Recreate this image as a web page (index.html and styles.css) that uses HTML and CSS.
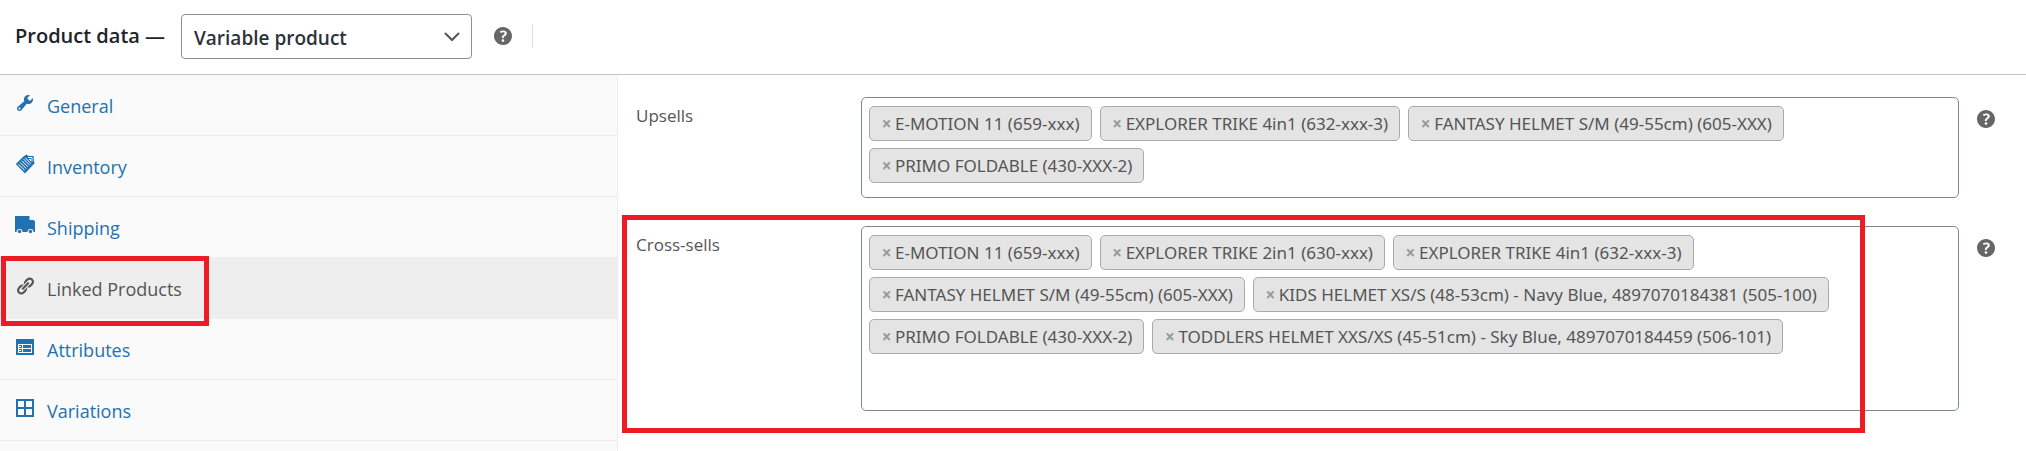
FILE: index.html
```html
<!DOCTYPE html>
<html lang="en">
<head>
<meta charset="utf-8">
<meta name="viewport" content="width=device-width, initial-scale=1">
<title>Product data</title>
<link rel="stylesheet" href="styles.css">
</head>
<body>
<svg class="defs" aria-hidden="true">
  <path id="help" d="M17 10c0-3.87-3.14-7-7-7-3.87 0-7 3.13-7 7s3.13 7 7 7c3.86 0 7-3.13 7-7zM10.700 11.480H9.140v-.43c0-.38.08-.7.24-.98s.46-.57.88-.89c.41-.29.68-.53.81-.71.14-.18.2-.39.2-.62 0-.25-.09-.44-.28-.58-.19-.13-.45-.19-.79-.19-.58 0-1.250.19-2 .57l-.64-1.280c.87-.49 1.800-.74 2.770-.74.81 0 1.450.2 1.920.58.48.39.71.91.71 1.550 0 .43-.09.8-.29 1.110-.19.32-.57.67-1.110 1.060-.38.28-.61.49-.71.63-.1.15-.15.34-.15.57v.35zm-1.470 2.740c-.18-.17-.27-.42-.27-.73 0-.33.08-.58.26-.75s.43-.25.77-.25c.32 0 .57.09.75.26s.27.42.27.74c0 .3-.09.55-.27.72-.18.18-.43.27-.75.27-.33 0-.58-.09-.76-.26z"/>
</svg>
<header class="header">
  <label class="title" for="type">Product data —</label>
  <div class="picker">
    <select id="type" class="type"><option>Variable product</option></select>
    <svg class="chevron" viewBox="0 0 20 20" aria-hidden="true"><path d="M3 6l7 7 7-7"/></svg>
  </div>
  <button class="help" type="button" aria-label="Help"><svg viewBox="3 3 14 14"><use href="#help"/></svg></button>
  <span class="divider"></span>
</header>
<div class="panel">
  <nav class="tabs">
    <a class="tab" href="#general"><svg class="icon" viewBox="0 0 20 20"><path d="M16.68 9.77c-1.34 1.34-3.3 1.67-4.95.99l-5.41 6.52c-.99.99-2.59.99-3.58 0s-.99-2.59 0-3.57l6.52-5.42c-.68-1.65-.35-3.61.99-4.95 1.28-1.28 3.12-1.62 4.72-1.06l-2.89 2.89 2.82 2.82 2.86-2.87c.53 1.58.18 3.39-1.08 4.65zM3.81 16.21c.4.39 1.04.39 1.43 0 .4-.4.4-1.04 0-1.43-.39-.4-1.03-.4-1.43 0-.39.39-.39 1.03 0 1.43z"/></svg>General</a>
    <a class="tab" href="#inventory"><svg class="icon" viewBox="0 0 20 20"><path d="M9 2l2.500-1.500 2 1.500 5 0 .5 6 .8 1L10 19.500.8 10z"/><path class="cut" d="M3.500 10.200l6 6M5.200 8.500l6 6M6.900 6.800l6 6M8.600 5.100l6 6M10.300 3.800l5.500 5.700M13 3.500h4v4M14 5.500h1.500v1.500"/></svg>Inventory</a>
    <a class="tab" href="#shipping"><svg class="icon" viewBox="0 0 20 20"><path d="M0 1h14.500v4h4l1.500 1.500V17h-1.500a3 3 0 0 0-6 0H7.500a3 3 0 0 0-6 0H0z"/><circle cx="4.500" cy="16.500" r="1.700"/><circle cx="15.500" cy="16.500" r="1.700"/></svg>Shipping</a>
    <a class="tab active" href="#linked" aria-current="page"><svg class="icon" viewBox="0 0 20 20"><path d="M17.740 2.760c1.680 1.690 1.680 4.410 0 6.100l-1.530 1.520c-1.120 1.120-2.700 1.470-4.140 1.090l2.620-2.610.76-.77.76-.76c.84-.84.84-2.200 0-3.040-.84-.85-2.200-.85-3.040 0l-.77.76-3.380 3.380c-.37-1.440-.02-3.020 1.100-4.140l1.520-1.530c1.690-1.680 4.420-1.680 6.100 0zM8.590 13.430l5.340-5.340c.42-.42.42-1.100 0-1.520-.44-.43-1.130-.39-1.530 0l-5.330 5.340c-.42.42-.42 1.100 0 1.520.44.43 1.130.39 1.520 0zm-.76 2.290l4.140-4.150c.38 1.440.03 3.020-1.090 4.140l-1.520 1.530c-1.690 1.680-4.410 1.680-6.100 0-1.680-1.680-1.680-4.420 0-6.100l1.530-1.520c1.120-1.120 2.700-1.470 4.140-1.100l-4.140 4.150c-.85.84-.85 2.200 0 3.050.84.84 2.200.84 3.040 0z"/></svg>Linked Products<span class="mark mark-tab"></span></a>
    <a class="tab" href="#attributes"><svg class="icon" viewBox="0 0 20 20"><path fill-rule="evenodd" d="M1 2h18v16H1zM3 7v9h14V7z"/><path d="M4 8h3v3H4zM4 12h3v3H4zM8 8h8v3H8zM8 12h8v3H8z"/><path class="cut" d="M4 9.500h2M4 13.500h2"/></svg>Attributes</a>
    <a class="tab" href="#variations"><svg class="icon" viewBox="0 0 20 20"><path fill-rule="evenodd" d="M1 1h18v18H1zM3 3v6h6V3zM11 3v6h6V3zM3 11v6h6v-6zM11 11v6h6v-6z"/></svg>Variations</a>
  </nav>
  <main class="fields">
    <div class="field">
      <label class="label" for="upsells">Upsells</label>
      <div class="box">
        <span class="chip"><button class="remove" type="button">×</button>E-MOTION 11 (659-xxx)</span>
        <span class="chip"><button class="remove" type="button">×</button>EXPLORER TRIKE 4in1 (632-xxx-3)</span>
        <span class="chip"><button class="remove" type="button">×</button>FANTASY HELMET S/M (49-55cm) (605-XXX)</span>
        <span class="chip"><button class="remove" type="button">×</button>PRIMO FOLDABLE (430-XXX-2)</span>
        <input class="search" id="upsells" type="text">
      </div>
      <button class="help" type="button" aria-label="Help"><svg viewBox="3 3 14 14"><use href="#help"/></svg></button>
    </div>
    <div class="field">
      <label class="label" for="cross">Cross-sells</label>
      <div class="box">
        <span class="chip"><button class="remove" type="button">×</button>E-MOTION 11 (659-xxx)</span>
        <span class="chip"><button class="remove" type="button">×</button>EXPLORER TRIKE 2in1 (630-xxx)</span>
        <span class="chip"><button class="remove" type="button">×</button>EXPLORER TRIKE 4in1 (632-xxx-3)</span>
        <span class="chip"><button class="remove" type="button">×</button>FANTASY HELMET S/M (49-55cm) (605-XXX)</span>
        <span class="chip"><button class="remove" type="button">×</button>KIDS HELMET XS/S (48-53cm) - Navy Blue, 4897070184381 (505-100)</span>
        <span class="chip"><button class="remove" type="button">×</button>PRIMO FOLDABLE (430-XXX-2)</span>
        <span class="chip"><button class="remove" type="button">×</button>TODDLERS HELMET XXS/XS (45-51cm) - Sky Blue, 4897070184459 (506-101)</span>
        <input class="search" id="cross" type="text">
      </div>
      <button class="help" type="button" aria-label="Help"><svg viewBox="3 3 14 14"><use href="#help"/></svg></button>
      <span class="mark mark-field"></span>
    </div>
  </main>
</div>
</body>
</html>
```
FILE: styles.css
```css
* { box-sizing: border-box; }
body {
  margin: 0;
  min-height: 100vh;
  display: flex;
  flex-direction: column;
  background: #fff;
  color: #555;
  font: 17px/24px "Segoe UI", "Open Sans", "Noto Sans", sans-serif;
}
.defs { position: absolute; width: 0; height: 0; }
button { padding: 0; border: 0; background: none; font: inherit; }

.header {
  display: flex;
  align-items: center;
  flex: none;
  height: 75px;
  padding: 0 15px 2px;
  border-bottom: 1px solid #c3c4c7;
  color: #1d2327;
}
.title { font-size: 20px; font-weight: 600; width: 166px; white-space: nowrap; }
.picker { position: relative; width: 291px; }
.type {
  appearance: none;
  display: block;
  width: 100%;
  height: 45px;
  padding: 4px 40px 0 12px;
  border: 1px solid #8c8f94;
  border-radius: 4px;
  background: #fff;
  color: #2c3338;
  font: 600 19px/28px "Segoe UI", "Open Sans", "Noto Sans", sans-serif;
}
.chevron {
  position: absolute;
  right: 10px;
  top: 13px;
  width: 20px;
  height: 20px;
  fill: none;
  stroke: #50575e;
  stroke-width: 2;
  pointer-events: none;
}
.help { flex: none; width: 18px; height: 18px; }
.help svg { display: block; width: 18px; height: 18px; fill: #666; }
.header .help { margin: 0 20px 0 22px; }
.divider { width: 1px; height: 24px; background: #dcdcde; }

.panel { display: flex; flex: 1; }
.tabs {
  flex: none;
  width: 618px;
  border-right: 1px solid #eee;
  background: #fafafa;
}
.tab {
  position: relative;
  display: flex;
  align-items: center;
  gap: 12px;
  height: 61px;
  padding: 2px 15px 0;
  border-bottom: 1px solid #eee;
  color: #2271b1;
  font-size: 18px;
  text-decoration: none;
}
.tab.active { background: #eee; color: #555; }
.icon { width: 20px; height: 20px; margin-bottom: 6px; fill: currentColor; }
.cut { fill: none; stroke: #fafafa; stroke-width: 1; }

.fields {
  display: flex;
  flex-direction: column;
  gap: 28px;
  flex: 1;
  min-width: 0;
  padding: 22px 31px 0 18px;
}
.field { position: relative; display: flex; align-items: flex-start; }
.label { flex: none; width: 225px; padding-top: 7px; }
.box {
  display: flex;
  flex-wrap: wrap;
  gap: 7px 8px;
  flex: 1;
  min-width: 0;
  padding: 8px 7px 14px;
  border: 1px solid #7e8993;
  border-radius: 5px;
}
.chip {
  display: flex;
  align-items: center;
  height: 35px;
  padding: 0 11px;
  border: 1px solid #aaa;
  border-radius: 5px;
  background: #e4e4e4;
  font-family: "Segoe UI", "Noto Sans", sans-serif;
  white-space: nowrap;
}
.remove { width: 11px; margin-right: 3px; color: #999; font-weight: 700; }
.search { flex: 1 0 180px; min-width: 0; height: 35px; padding: 0; border: 0; outline: 0; background: none; font: inherit; }
.field .help { margin: 13px 0 0 18px; }

.mark { position: absolute; border: 5px solid #ed1c24; pointer-events: none; z-index: 1; }
.mark-tab { left: 1px; top: -2px; width: 208px; height: 70px; }
.mark-field { left: -14px; right: 130px; top: -11px; bottom: -22px; }
```
